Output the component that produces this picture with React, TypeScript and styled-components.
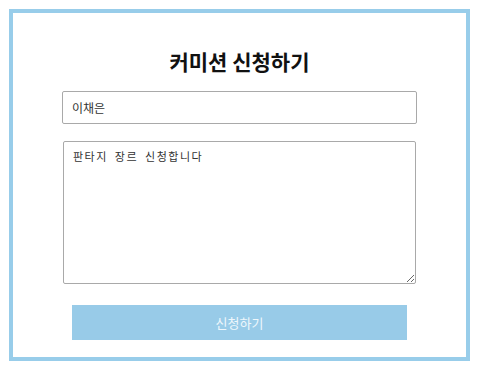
import React, { useState } from "react";
import styled, { createGlobalStyle } from "styled-components";

const GlobalStyle = createGlobalStyle`
  body {
    margin: 0;
    background: #fff;
    font-family: "Noto Sans CJK KR", "Noto Sans", sans-serif;
  }
`;

const Page = styled.div`
  padding: 9px;
`;

const Box = styled.form`
  width: 461px;
  height: 352px;
  box-sizing: border-box;
  border: 4px solid #98cdea;
  padding-top: 33px;
  display: flex;
  flex-direction: column;
  align-items: center;
`;

const Title = styled.h2`
  margin: 0 0 15px;
  font-size: 21px;
  line-height: 30px;
  font-weight: 700;
  color: #111;
`;

const NameInput = styled.input`
  width: 355px;
  height: 33px;
  box-sizing: border-box;
  margin-bottom: 17px;
  padding: 0 9px;
  border: 1px solid #a9a9a9;
  border-radius: 2px;
  font-family: "Noto Sans CJK KR", sans-serif;
  font-size: 12px;
  color: #333;
  outline: none;
`;

const Message = styled.textarea`
  width: 353px;
  height: 143px;
  box-sizing: border-box;
  margin-bottom: 21px;
  padding: 7px 9px;
  border: 1px solid #a9a9a9;
  border-radius: 2px;
  font-family: "Noto Sans CJK KR", sans-serif;
  font-size: 11px;
  line-height: 15px;
  letter-spacing: 1.5px;
  word-spacing: 3px;
  color: #333;
  outline: none;
`;

const Submit = styled.button`
  width: 335px;
  height: 35px;
  border: none;
  background: #98cbe8;
  color: #eef7fc;
  font-family: "Noto Sans CJK KR", sans-serif;
  font-size: 13px;
  cursor: pointer;
`;

export default function App() {
  const [name, setName] = useState("이채은");
  const [text, setText] = useState("판타지 장르 신청합니다");

  return (
    <Page>
      <GlobalStyle />
      <Box onSubmit={(e) => e.preventDefault()}>
        <Title>커미션 신청하기</Title>
        <NameInput value={name} onChange={(e) => setName(e.target.value)} />
        <Message value={text} onChange={(e) => setText(e.target.value)} />
        <Submit type="submit">신청하기</Submit>
      </Box>
    </Page>
  );
}
